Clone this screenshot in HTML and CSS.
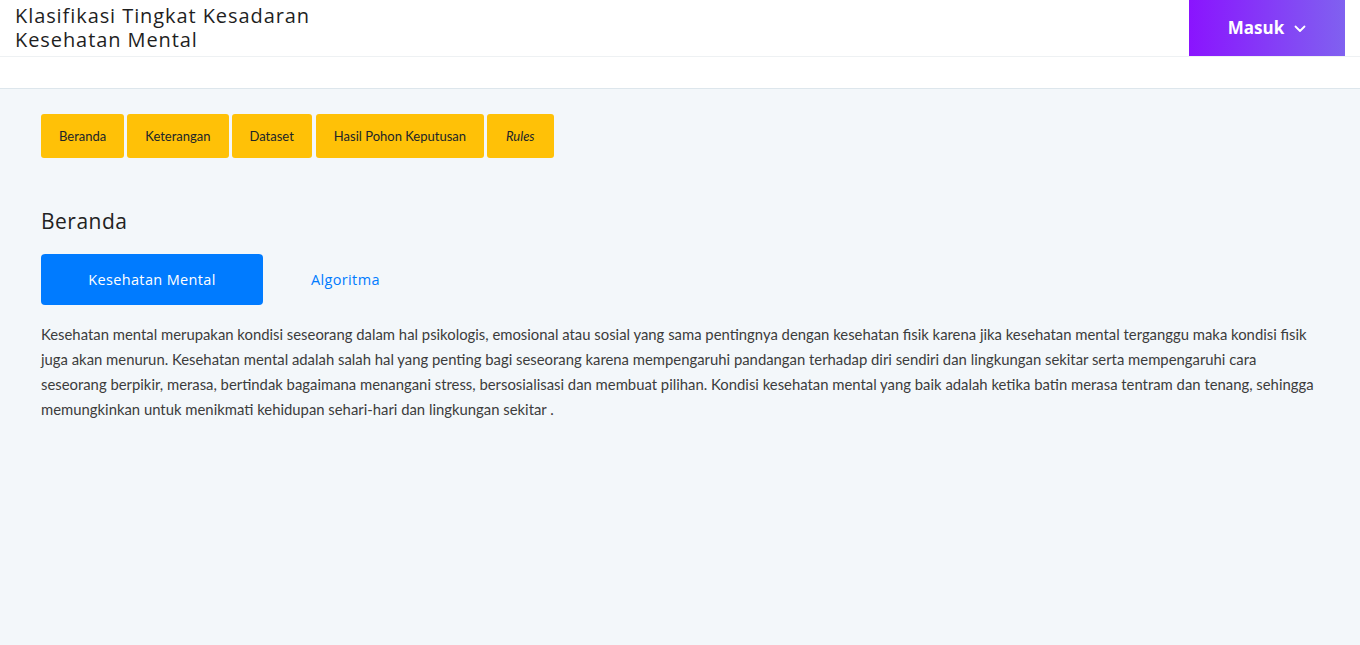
FILE: index.html
```html
<!DOCTYPE html>
<html lang="id">
<head>
<meta charset="utf-8">
<title>Klasifikasi Tingkat Kesadaran Kesehatan Mental</title>
<link rel="stylesheet" href="styles.css">
</head>
<body>
<header class="topbar">
  <h1 class="brand"><span class="brand-line">Klasifikasi Tingkat Kesadaran</span><span class="brand-line">Kesehatan Mental</span></h1>
  <button class="login">Masuk
    <svg class="chev" width="12" height="8" viewBox="0 0 12 8"><path d="M1.5 1.5 L6 6 L10.5 1.5" fill="none" stroke="#fff" stroke-width="1.8" stroke-linecap="round" stroke-linejoin="round"/></svg>
  </button>
</header>
<div class="subbar"></div>
<main class="content">
  <nav class="menu">
    <a class="menu-btn">Beranda</a>
    <a class="menu-btn">Keterangan</a>
    <a class="menu-btn">Dataset</a>
    <a class="menu-btn">Hasil Pohon Keputusan</a>
    <a class="menu-btn rules"><em>Rules</em></a>
  </nav>
  <h2 class="title">Beranda</h2>
  <div class="tabs">
    <a class="tab active">Kesehatan Mental</a>
    <a class="tab">Algoritma</a>
  </div>
  <p class="text">Kesehatan mental merupakan kondisi seseorang dalam hal psikologis, emosional atau sosial yang sama pentingnya dengan kesehatan fisik karena jika kesehatan mental terganggu maka kondisi fisik juga akan menurun. Kesehatan mental adalah salah hal yang penting bagi seseorang karena mempengaruhi pandangan terhadap diri sendiri dan lingkungan sekitar serta mempengaruhi cara seseorang berpikir, merasa, bertindak bagaimana menangani stress, bersosialisasi dan membuat pilihan. Kondisi kesehatan mental yang baik adalah ketika batin merasa tentram dan tenang, sehingga memungkinkan untuk menikmati kehidupan sehari-hari dan lingkungan sekitar .</p>
</main>
</body>
</html>
```
FILE: styles.css
```css
* { box-sizing: border-box; }
html, body { margin: 0; padding: 0; }
body {
  background: #f3f7fa;
  font-family: "Lato", "Liberation Sans", sans-serif;
  color: #212529;
  min-height: 645px;
}
.topbar {
  height: 57px;
  background: #fff;
  border-bottom: 1px solid #eef1f3;
  display: flex;
  justify-content: space-between;
  align-items: flex-start;
  padding: 0 15px;
}
.brand {
  margin: 0;
  padding-top: 4px;
  font-family: "Open Sans", sans-serif;
  font-weight: 500;
  font-size: 20px;
  color: #1f1f1f;
  letter-spacing: 0.92px;
  display: flex;
  flex-direction: column;
}
.brand-line { display: block; height: 24px; line-height: 24px; }
.login {
  width: 156px;
  height: 56px;
  border: 0;
  background: linear-gradient(90deg, #8a14fe 0%, #8061f0 100%);
  color: #fff;
  font-family: "Open Sans", sans-serif;
  font-weight: 700;
  font-size: 17px;
  display: flex;
  align-items: center;
  justify-content: center;
  gap: 10px;
  padding: 0 0 2px 0;
}
.chev { margin-top: 3px; }
.subbar {
  height: 32px;
  background: #fff;
  border-bottom: 1px solid #dde6ec;
}
.content { padding: 25px 41px 0 41px; }
.menu { display: flex; gap: 3px; }
.menu-btn {
  background: #ffc107;
  border-radius: 3px;
  height: 44px;
  padding: 0 18px 1px 18px;
  display: flex;
  align-items: center;
  font-size: 13px;
  color: #212529;
}
.menu-btn:nth-child(4) { margin-left: 1px; }
.menu-btn.rules { padding: 0 19px 1px 19px; }
.title {
  margin: 49px 0 0 0;
  font-family: "Open Sans", sans-serif;
  font-weight: 500;
  font-size: 21px;
  line-height: 28px;
  letter-spacing: 0.5px;
  color: #222;
}
.tabs { display: flex; margin-top: 19px; }
.tab {
  height: 51px;
  padding: 0 48px;
  display: flex;
  align-items: center;
  font-family: "Open Sans", sans-serif;
  font-size: 14.5px;
  letter-spacing: 0.35px;
  color: #007bff;
  border-radius: 4px;
}
.tab.active { background: #007bff; color: #fff; width: 222px; justify-content: center; padding: 0; }
.text {
  margin: 17px 0 0 0;
  font-size: 14.85px;
  line-height: 25px;
  color: #3c3c3c;
}
```
